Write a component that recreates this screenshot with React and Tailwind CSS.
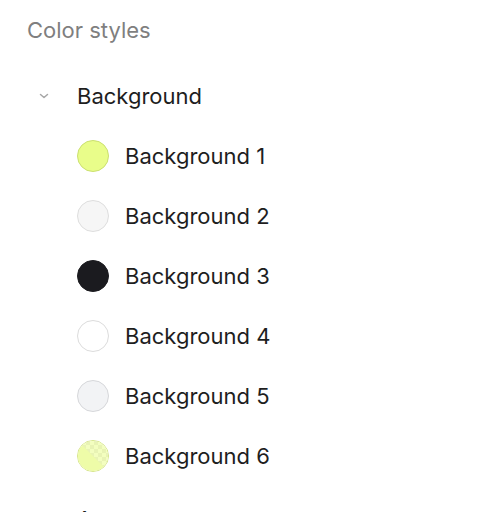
import React from "react";

const items = [
  { name: "Background 1", cls: "bg-[#e9fd8a] border-[#cbe070]" },
  { name: "Background 2", cls: "bg-[#f6f6f6] border-[#dedede]" },
  { name: "Background 3", cls: "bg-[#1b1b1f] border-[#1b1b1f]" },
  { name: "Background 4", cls: "bg-white border-[#dcdcdc]" },
  { name: "Background 5", cls: "bg-[#f2f3f5] border-[#d6d7da]" },
];

function Checker() {
  return (
    <div className="relative w-[32px] h-[32px] rounded-full overflow-hidden border border-[#d6e58a]">
      <svg width="32" height="32" viewBox="0 0 32 32" className="absolute inset-0">
        <defs>
          <pattern id="ck" width="8" height="8" patternUnits="userSpaceOnUse">
            <rect width="8" height="8" fill="#ffffff" />
            <rect width="4" height="4" fill="#e6e6e6" />
            <rect x="4" y="4" width="4" height="4" fill="#e6e6e6" />
          </pattern>
        </defs>
        <rect width="32" height="32" fill="url(#ck)" />
        <rect width="32" height="32" fill="#e9fd8a" opacity="0.55" />
        <polygon points="0,0 0,32 32,32" fill="#eefca8" />
      </svg>
    </div>
  );
}

export default function App() {
  return (
    <div className="w-[496px] h-[512px] overflow-hidden bg-white" style={{ fontFamily: "Inter, 'Noto Sans', sans-serif" }}>
      <div className="h-[60px] flex items-center pl-[27px] text-[22px] text-[#7f7f7f]">Color styles</div>
      <div className="mt-[6px]">
        <div className="h-[60px] flex items-center">
          <div className="w-[77px] flex justify-end pr-[27px]">
            <svg width="12" height="8" viewBox="0 0 12 8">
              <path d="M2.5 2.5 L6 5.5 L9.5 2.5" fill="none" stroke="#a6a6a6" strokeWidth="1.5" strokeLinecap="round" strokeLinejoin="round" />
            </svg>
          </div>
          <span className="text-[22px] text-[#1e1e1e]">Background</span>
        </div>
        {items.map((it) => (
          <div key={it.name} className="h-[60px] flex items-center pl-[77px] gap-[16px]">
            <div className={`w-[32px] h-[32px] rounded-full border ${it.cls}`} />
            <span className="text-[22px] text-[#1e1e1e]">{it.name}</span>
          </div>
        ))}
        <div className="h-[60px] flex items-center pl-[77px] gap-[16px]">
          <Checker />
          <span className="text-[22px] text-[#1e1e1e]">Background 6</span>
        </div>
        <div className="h-[60px] mt-[3px] flex items-center pl-[77px]">
          <span className="text-[22px] text-[#1e1e1e]">Accent</span>
        </div>
      </div>
    </div>
  );
}
